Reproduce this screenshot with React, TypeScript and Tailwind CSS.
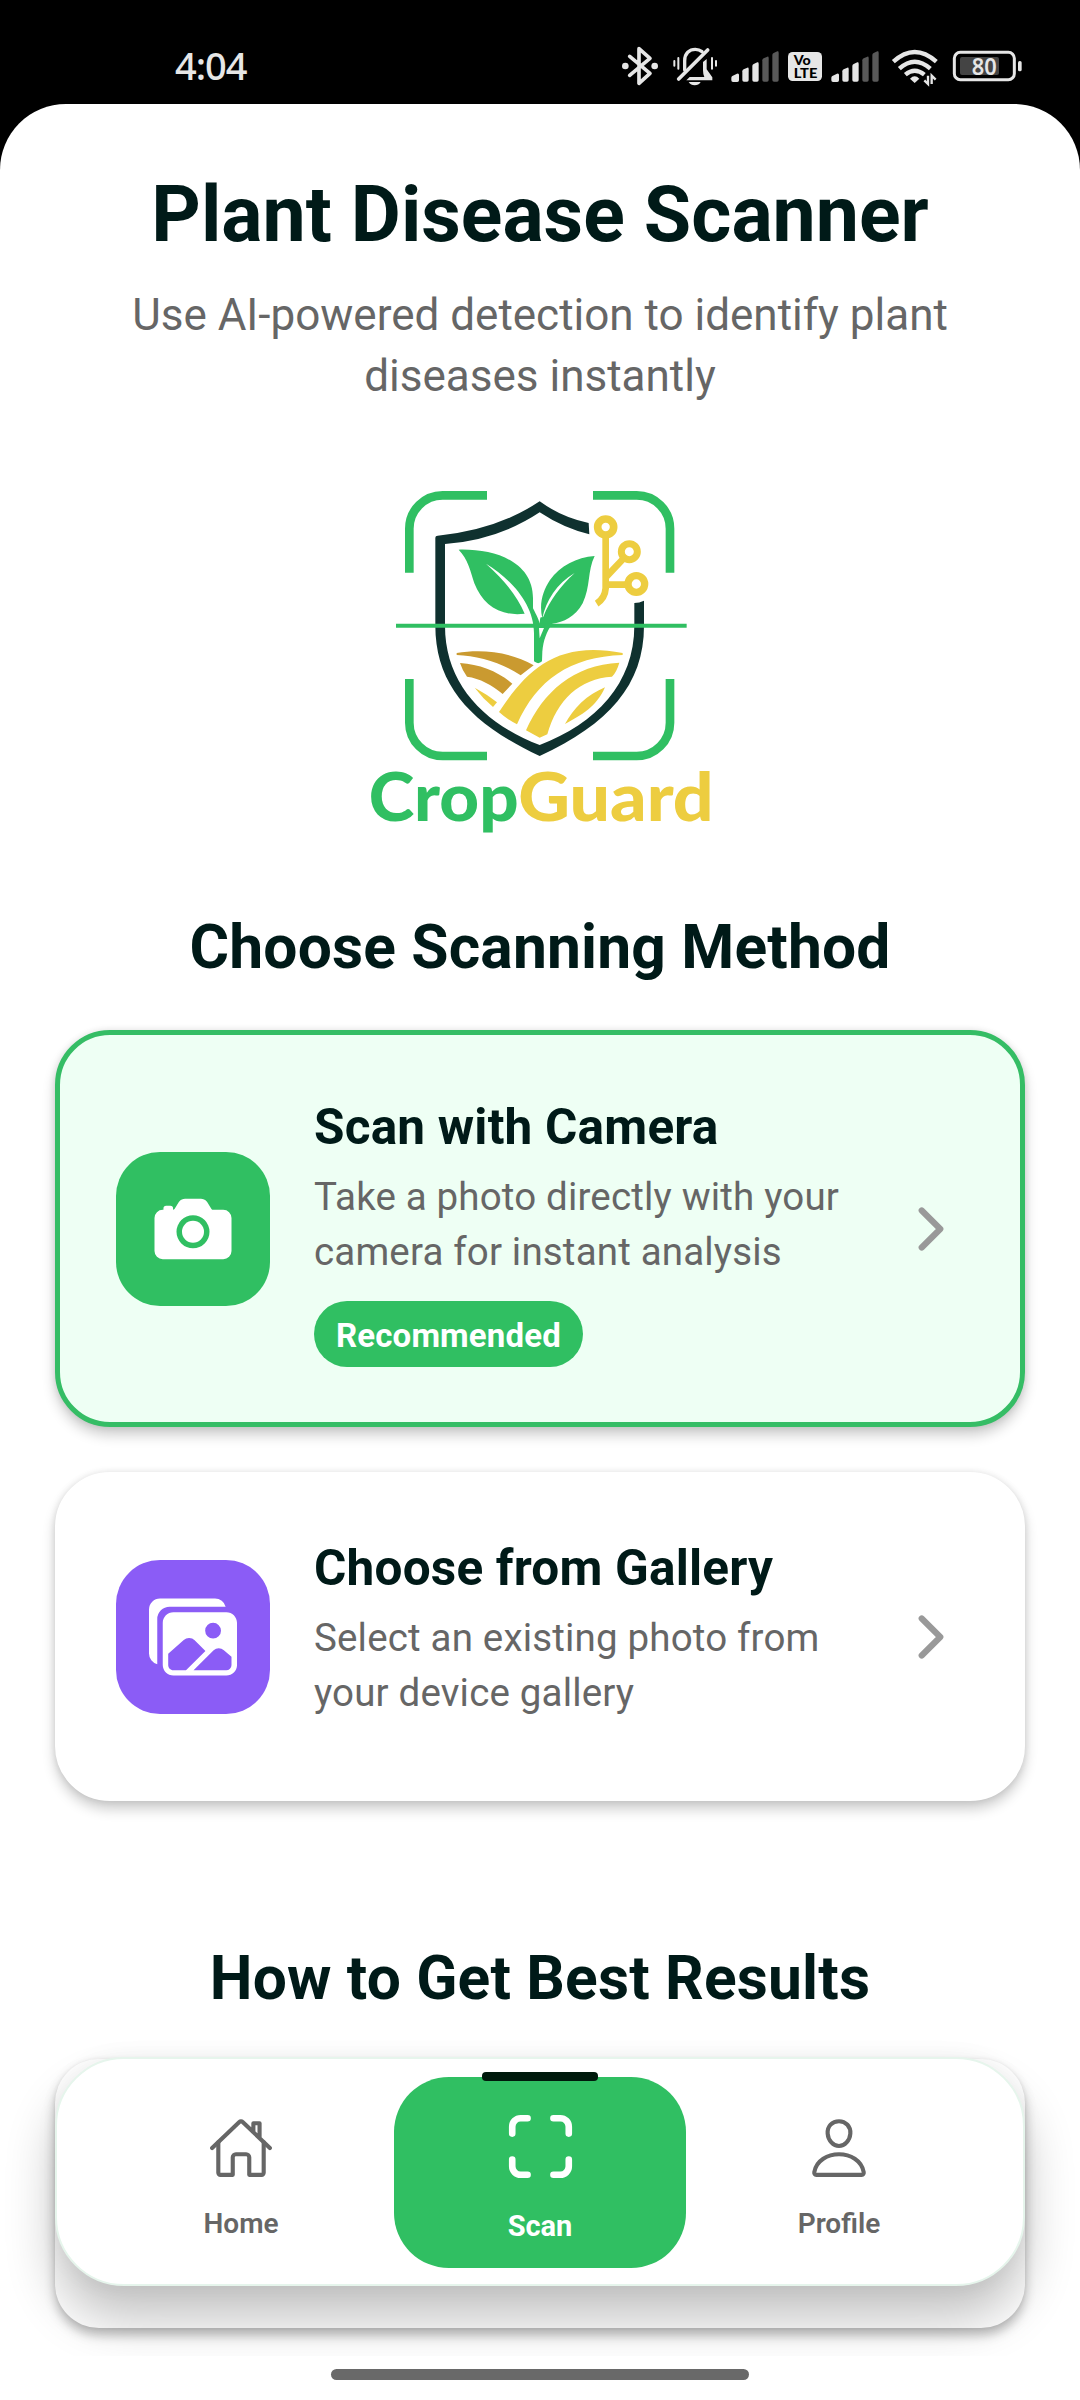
import type { ReactNode } from "react";
import {
  IoCamera,
  IoImages,
  IoChevronForward,
  IoScan,
  IoHomeOutline,
  IoPersonOutline,
} from "react-icons/io5";

function StatusIcons() {
  const light = "#e6e6e6";
  const dim = "#595959";
  const bars = (x: number) => (
    <g transform={`translate(${x} 0)`}>
      <path d="M0 155v-12q0-3 3-5l14-7q6-2 6 4v16q0 5-5 5H5q-5 0-5-5z" fill={light} />
      <path d="M33 150v-26q0-4 4-6l11-5q4-1 4 4v33q0 5-5 5h-9q-5 0-5-5z" fill={light} />
      <path d="M63 150v-42q0-4 4-6l11-5q4-1 4 4v49q0 5-5 5h-9q-5 0-5-5z" fill={light} />
      <path d="M93 150V91q0-4 4-6l11-5q4-1 4 4v66q0 5-5 5h-9q-5 0-5-5z" fill={dim} />
      <path d="M123 150V75q0-4 4-6l11-5q4-1 4 4v82q0 5-5 5h-9q-5 0-5-5z" fill={dim} />
    </g>
  );
  return (
    <svg width="440" height="80" viewBox="0 0 1320 240" fill="none">
      <g stroke={light} strokeWidth="11" strokeLinecap="round" strokeLinejoin="round">
        <path d="M89 79l61 51-33 30V56l33 29-61 51" />
      </g>
      <circle cx="76" cy="108" r="10" fill={light} />
      <circle cx="164" cy="108" r="10" fill={light} />
      <g stroke={light} strokeLinecap="round">
        <path d="M323 60L236 147" strokeWidth="11" />
        <path d="M254 120V92c0-22 14-34 32-34 8 0 15 3 20 7" strokeWidth="10" />
        <path d="M223 93v14M235 84v32M336 84v32M348 93v14" strokeWidth="6" />
      </g>
      <path d="M309 96l11-9v31l17 24v9h-78l10-10h44q-4-8-4-20z" fill={light} />
      <path d="M266 156h36q-6 10-18 10t-18-10z" fill={light} />
      {bars(394)}
      <rect x="564" y="66" width="102" height="87" rx="14" fill={light} />
      <g fill="#000" className="font-['Lato',sans-serif] font-black" fontSize="39">
        <text x="581" y="106" textLength="51" lengthAdjust="spacingAndGlyphs">Vo</text>
        <text x="581" y="143" textLength="71" lengthAdjust="spacingAndGlyphs">LTE</text>
      </g>
      {bars(694)}
      <g stroke={light} strokeWidth="13">
        <path d="M880 95Q944 37 1009 95" />
        <path d="M898 116Q944 74 991 116" />
        <path d="M916 134Q944 110 973 134" />
      </g>
      <path d="M930 146q14-14 28 0l-14 13z" fill={light} />
      <path d="M984 137v25l-11-11M995 162v-25l12 12" stroke={light} strokeWidth="7" />
      <rect x="1063" y="67" width="180" height="82" rx="18" stroke={light} strokeWidth="9" />
      <rect x="1080" y="81" width="117" height="54" rx="6" fill="#444" />
      <rect x="1254" y="93" width="11" height="31" rx="5" fill={light} />
      <text
        x="1115"
        y="135"
        fill={light}
        fontSize="70"
        textLength="75"
        lengthAdjust="spacingAndGlyphs"
        className="font-['Noto_Sans',sans-serif] font-semibold"
      >
        80
      </text>
    </svg>
  );
}

function CropGuardLogo() {
  const green = "#30bf62";
  const yellow = "#edcd40";
  const dark = "#0f312f";
  return (
    <svg width="380" height="380" viewBox="0 0 1140 1140" fill="none">
      <g stroke={green} strokeWidth="26">
        <path d="M178 308V176A100 100 0 01278 76H411" />
        <path d="M729 76H860A100 100 0 01960 176V308" />
        <path d="M178 627V758A100 100 0 00278 858H411" />
        <path d="M729 858H860A100 100 0 00960 758V627" />
      </g>
      <path
        d="M569 94Q635 142 716 159L718 193Q640 174 569 127Q444 210 285 222V467C285 640 400 760 569 825C738 760 853 640 853 467V399Q868 399 882 392V467C882 645 775 762 569 858C363 762 256 645 256 467V203Q256 197 263 197Q440 180 569 94Z"
        fill={dark}
      />
      <path
        d="M326 239C440 236 549 278 549 385V415C560 437 567 450 569 461C571 430 573 447 580 440C600 390 630 350 674 309C620 341 588 392 577 445C566 400 580 360 600 330C630 288 680 262 734 258C712 302 722 350 698 400C676 440 640 458 607 461C590 485 580 510 577 545L576 574Q565 585 552 574V490C552 400 480 325 408 281C465 332 502 380 524 431C450 440 398 405 373 340C361 302 354 268 326 239Z"
        fill={green}
      />
      <path d="M567 474H582L569 505Z" fill="#fff" />
      <path d="M138 467H1010" stroke={green} strokeWidth="12" />
      <path d="M320 549C395 537 480 545 551 586L512 616C455 578 385 558 320 555Z" fill="#ca9a30" />
      <path d="M330 579C390 583 445 605 487 641L458 672C425 645 390 625 351 620Q337 601 330 579Z" fill="#ca9a30" />
      <path d="M374 653Q410 672 441 697L429 711Q398 685 374 653Z" fill={yellow} />
      <path d="M447 726C530 600 620 510 818 549V555C660 560 560 630 501 763Q471 748 447 726Z" fill={yellow} />
      <path d="M528 781C580 665 670 585 808 578Q800 606 786 620C690 625 620 690 592 793L569 803Z" fill={yellow} />
      <path d="M765 652C740 710 695 735 645 762C670 715 710 675 765 652Z" fill={yellow} />
      <g stroke={yellow}>
        <circle cx="767" cy="171" r="24" strokeWidth="23" />
        <circle cx="838" cy="245" r="24" strokeWidth="21" />
        <circle cx="859" cy="342" r="25" strokeWidth="22" />
        <path d="M767 204V355Q765 385 740 401M767 322L822 264M770 344H832" strokeWidth="20" />
      </g>
      <g fontSize="199" className="font-['Lato',sans-serif] font-black">
        <text x="56" y="1054" fill={green} textLength="450" lengthAdjust="spacingAndGlyphs">
          Crop
        </text>
        <text x="505" y="1054" fill={yellow} textLength="586" lengthAdjust="spacingAndGlyphs">
          Guard
        </text>
      </g>
    </svg>
  );
}

type MethodCardProps = {
  icon: ReactNode;
  iconClass: string;
  cardClass: string;
  title: string;
  lines: [string, string];
  badge?: string;
};

function MethodCard({ icon, iconClass, cardClass, title, lines, badge }: MethodCardProps) {
  return (
    <button
      className={`flex w-full items-center rounded-[55px] border-[5.5px] pr-[56px] pl-[56px] text-left shadow-[0_8px_13px_rgba(0,0,0,0.2),0_0_7px_rgba(0,0,0,0.1)] ${cardClass}`}
    >
      <span className={`flex size-[154px] shrink-0 items-center justify-center rounded-[44px] text-white ${iconClass}`}>
        {icon}
      </span>
      <span className="ml-[44px] flex flex-1 flex-col items-start">
        <span className="pt-2 text-[49.5px] leading-[58px] font-bold tracking-[0.2px] text-[#001a18]">{title}</span>
        <span className="mt-[13px] mb-[22px] text-[38.5px] leading-[55px] tracking-[0.17px] whitespace-nowrap text-[#666]">
          {lines[0]}
          <br />
          {lines[1]}
        </span>
        {badge && (
          <span className="flex h-[66px] items-center rounded-[33px] bg-[#30bf62] px-[22px] pt-[3px] text-[33px] font-bold tracking-[0.15px] text-white">
            {badge}
          </span>
        )}
      </span>
      <IoChevronForward className="size-[66px] shrink-0 text-[#999]" />
    </button>
  );
}

export default function App() {
  return (
    <div className="flex h-[2400px] w-[1080px] flex-col overflow-hidden bg-black font-['Roboto',sans-serif]">
      <header className="flex h-[104px] shrink-0 items-start justify-between pr-[40px] pl-[175px]">
        <span className="mt-[39px] font-['Noto_Sans',sans-serif] text-[38px] leading-[52px] font-medium tracking-[-1px] text-[#e6e6e6]">
          4:04
        </span>
        <span className="mt-[30px]">
          <StatusIcons />
        </span>
      </header>

      <div className="flex flex-1 flex-col overflow-hidden rounded-t-[66px] bg-white">
        <div className="relative h-[2252px] shrink-0 overflow-hidden">
          <main className="flex flex-col items-center px-[55px] text-center">
            <h1 className="mt-[66px] text-[77px] leading-[90px] font-bold text-[#001a18]">Plant Disease Scanner</h1>
            <p className="mt-[25px] text-[44px] leading-[60.5px] text-[#666]">
              Use AI-powered detection to identify plant
              <br />
              diseases instantly
            </p>
            <div className="mt-[64px]">
              <CropGuardLogo />
            </div>
            <h2 className="mt-[62px] text-[60.5px] leading-[72px] font-bold tracking-[0.17px] text-[#001a18]">
              Choose Scanning Method
            </h2>

            <section className="mt-[46px] flex w-full flex-col gap-[45px]">
              <MethodCard
                icon={<IoCamera className="size-[88px]" />}
                iconClass="bg-[#30bf62]"
                cardClass="h-[397px] border-[#35bd65] bg-[#eefff4]"
                title="Scan with Camera"
                lines={["Take a photo directly with your", "camera for instant analysis"]}
                badge="Recommended"
              />
              <MethodCard
                icon={<IoImages className="size-[88px]" />}
                iconClass="bg-[#8b5cf6]"
                cardClass="h-[329px] border-white bg-white"
                title="Choose from Gallery"
                lines={["Select an existing photo from", "your device gallery"]}
              />
            </section>

            <h2 className="mt-[142px] text-[60.5px] leading-[72px] font-bold tracking-[0.17px] text-[#001a18]">
              How to Get Best Results
            </h2>
            <div className="mt-[44px] h-[269px] w-full rounded-[44px] bg-white shadow-[0_7px_11px_rgba(0,0,0,0.26),0_0_4px_rgba(0,0,0,0.06)]" />
          </main>

          <nav className="absolute top-[1953px] left-[55px] flex h-[229px] w-[970px] items-center justify-center rounded-[69px] border-[2.75px] border-[#e6f5ec] bg-white shadow-[0_33px_50px_rgba(0,0,0,0.24),0_0_22px_rgba(0,0,0,0.05)]">
            <a className="flex w-[306px] shrink-0 flex-col items-center pt-[14px] text-[#666]">
              <IoHomeOutline className="size-[66px]" />
              <span className="mt-[25px] text-[28px] leading-[36px] font-semibold">Home</span>
            </a>
            <a className="relative mt-[2px] flex h-[191px] w-[292px] shrink-0 flex-col items-center justify-center rounded-[55px] bg-[#30bf62] pt-[7px] text-white">
              <span className="absolute top-[-5px] left-[88px] h-[9px] w-[116px] rounded-[4px] bg-[#001a0c]" />
              <IoScan className="size-[77px]" />
              <span className="mt-[23px] text-[29px] leading-[36px] font-bold">Scan</span>
            </a>
            <a className="flex w-[306px] shrink-0 flex-col items-center pt-[14px] text-[#666]">
              <IoPersonOutline className="size-[66px]" />
              <span className="mt-[25px] text-[28px] leading-[36px] font-semibold">Profile</span>
            </a>
          </nav>
        </div>
        <div className="flex flex-1 items-start justify-center bg-white pt-[13px]">
          <div className="h-[11px] w-[418px] rounded-full bg-[#696969]" />
        </div>
      </div>
    </div>
  );
}
